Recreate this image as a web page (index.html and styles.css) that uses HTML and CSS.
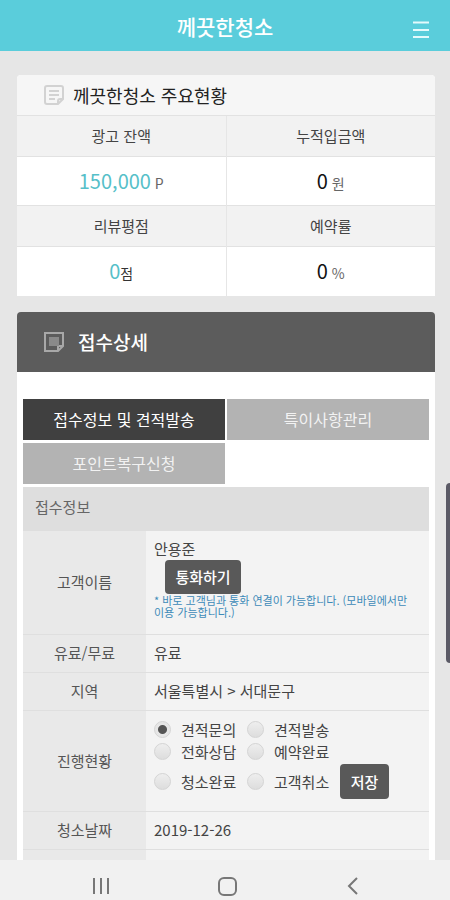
FILE: index.html
```html
<!DOCTYPE html>
<html lang="ko">
<head>
<meta charset="utf-8">
<meta name="viewport" content="width=device-width, initial-scale=1">
<title>께끗한청소</title>
<link rel="stylesheet" href="styles.css">
</head>
<body>
	<header class="top">
		<h1>께끗한청소</h1>
		<button type="button" class="menu" aria-label="메뉴">
			<svg width="18" height="18" viewBox="0 0 18 18"><path d="M1 1.5h16M1 9h16M1 16h16"/></svg>
		</button>
	</header>

	<main>
		<!-- 주요현황 -->
		<section class="summary">
			<h2>
				<svg width="20" height="20" viewBox="0 0 20 20"><path d="M3 1h14a2 2 0 0 1 2 2v11l-5 5H3a2 2 0 0 1-2-2V3a2 2 0 0 1 2-2z"/><path d="M19 14h-3a2 2 0 0 0-2 2v3M5 6h10M5 10h10M5 14h6"/></svg>
				께끗한청소 주요현황
			</h2>
			<table>
				<tr><th>광고 잔액</th><th>누적입금액</th></tr>
				<tr>
					<td><span class="num point">150,000</span> P</td>
					<td><span class="num">0</span> 원</td>
				</tr>
				<tr><th>리뷰평점</th><th>예약률</th></tr>
				<tr>
					<td><span class="num point">0</span><span class="dark">점</span></td>
					<td><span class="num">0</span> %</td>
				</tr>
			</table>
		</section>

		<!-- 접수상세 -->
		<section class="detail">
			<h2>
				<svg width="20" height="20" viewBox="0 0 20 20"><path d="M1 1h18v13l-5 5H1z"/><path d="M19 14h-5v5"/><path class="fill" d="M5 5h10v9H5z"/></svg>
				접수상세
			</h2>
			<div class="detailBody">
				<nav class="tabs">
					<a href="#" class="on">접수정보 및 견적발송</a>
					<a href="#">특이사항관리</a>
					<a href="#">포인트복구신청</a>
				</nav>
				<form>
				<table class="info">
					<caption>접수정보</caption>
					<tr>
						<th>고객이름</th>
						<td class="customer">
							안용준
							<button type="button" class="btn call">통화하기</button>
							<p class="note">* 바로 고객님과 통화 연결이 가능합니다. (모바일에서만 이용 가능합니다.)</p>
						</td>
					</tr>
					<tr><th>유료/무료</th><td>유료</td></tr>
					<tr><th>지역</th><td>서울특별시 &gt; 서대문구</td></tr>
					<tr>
						<th>진행현황</th>
						<td>
							<div class="status">
								<label><input type="radio" name="status" checked>견적문의</label>
								<label><input type="radio" name="status">견적발송</label>
								<label class="first"><input type="radio" name="status">전화상담</label>
								<label><input type="radio" name="status">예약완료</label>
								<label class="first"><input type="radio" name="status">청소완료</label>
								<label><input type="radio" name="status">고객취소</label>
								<button type="button" class="btn save">저장</button>
							</div>
						</td>
					</tr>
					<tr><th>청소날짜</th><td>2019-12-26</td></tr>
					<tr><th></th><td></td></tr>
				</table>
				</form>
			</div>
		</section>
	</main>

	<div class="edge"></div>

	<footer class="softkeys">
		<button type="button" aria-label="최근 앱"><svg width="20" height="20" viewBox="0 0 20 20"><path d="M3 2v16M10 2v16M17 2v16"/></svg></button>
		<button type="button" aria-label="홈"><svg width="20" height="20" viewBox="0 0 20 20"><rect x="2" y="2" width="17" height="17" rx="5"/></svg></button>
		<button type="button" aria-label="뒤로"><svg width="20" height="20" viewBox="0 0 20 20"><path d="M14 2l-8 8 8 8"/></svg></button>
	</footer>
</body>
</html>
```
FILE: styles.css
```css
* { box-sizing: border-box; }
body {
	display: flex;
	flex-direction: column;
	height: 100vh;
	margin: 0;
	overflow: hidden;
	background: #e6e6e6;
	color: #444;
	font: 15px/22px "Noto Sans CJK KR", sans-serif;
}
h1, h2, p { margin: 0; }
button {
	padding: 0;
	border: 0;
	background: none;
	font: inherit;
}
svg {
	display: block;
	fill: none;
	stroke: currentColor;
}
table {
	width: 100%;
	border-collapse: collapse;
	table-layout: fixed;
}
th { font-weight: normal; }

/* header */
.top {
	display: grid;
	grid-template-columns: 40px 1fr 40px;
	flex: none;
	align-items: center;
	height: 51px;
	background: #5acddb;
	color: #fff;
}
.top h1 {
	grid-column: 2;
	font-size: 21px;
	font-weight: 500;
	text-align: center;
}
.menu {
	padding: 8px 0 0 2px;
	color: #e4fafc;
}
.menu svg { stroke-width: 2; }

main {
	flex: 1;
	min-height: 0;
	overflow: hidden;
	padding: 24px 15px 0 17px;
}
section h2 {
	display: flex;
	align-items: center;
	padding-left: 27px;
}

/* summary */
.summary {
	overflow: hidden;
	margin-bottom: 16px;
	border-radius: 4px 4px 0 0;
	background: #fff;
}
.summary h2 {
	gap: 9px;
	height: 40px;
	background: #f6f6f6;
	color: #222;
	font-size: 18px;
	font-weight: 400;
}
.summary h2 svg {
	color: #d2d2d2;
	stroke-width: 2;
}
.summary th, .summary td {
	padding: 0;
	border-top: 1px solid #e2e2e2;
	text-align: center;
}
.summary th + th, .summary td + td { border-left: 1px solid #e6e6e6; }
.summary th {
	height: 41px;
	background: #f2f2f2;
}
.summary td {
	height: 49px;
	padding-top: 2px;
	color: #666;
	font-size: 14px;
}
.num {
	color: #111;
	font-size: 20px;
}
.summary .point { color: #56bfc9; }
.dark { color: #333; }

/* detail */
.detail h2 {
	gap: 14px;
	height: 60px;
	border-radius: 4px 4px 0 0;
	background: #5c5c5c;
	color: #fff;
	font-size: 19px;
	font-weight: 500;
}
.detail h2 svg {
	color: #a8a8a8;
	stroke-width: 2;
}
.detail h2 .fill {
	fill: #8a8a8a;
	stroke: none;
}
.detailBody {
	padding: 27px 6px 0;
	background: #fff;
}
.tabs {
	display: grid;
	grid-template-columns: 1fr 1fr;
	gap: 3px 2px;
	margin-bottom: 3px;
}
.tabs a {
	height: 41px;
	background: #b3b3b3;
	color: #f2f2f2;
	font-size: 16px;
	line-height: 41px;
	text-align: center;
	text-decoration: none;
}
.tabs .on {
	background: #404040;
	color: #fff;
}
.info caption {
	height: 44px;
	padding-left: 12px;
	background: #dedede;
	color: #666;
	line-height: 40px;
	text-align: left;
}
.info th, .info td {
	height: 38px;
	padding: 0 8px;
	border-bottom: 1px solid #dfdfdf;
}
.info th {
	width: 123px;
	background: #e9e9e9;
	color: #555;
}
.info td { background: #f3f3f3; }
.info .customer { padding: 7px 8px 16px; }
.btn {
	display: block;
	border-radius: 4px;
	background: #595959;
	color: #fff;
	font-weight: 500;
}
.call {
	width: 76px;
	height: 34px;
	margin-left: 11px;
}
.note {
	color: #3d8ab8;
	font-size: 11px;
	line-height: 12px;
	word-break: keep-all;
}
.status {
	display: grid;
	grid-template-columns: 93px 93px auto;
	grid-template-rows: 22px 22px 38px;
	align-items: center;
	padding: 8px 0 10px;
}
.status label {
	display: flex;
	align-items: center;
	gap: 10px;
}
.status .first { grid-column: 1; }
.status input {
	width: 17px;
	height: 17px;
	margin: 0;
	border: 1px solid #d5d5d5;
	border-radius: 50%;
	appearance: none;
	background: linear-gradient(#eee, #ddd);
}
.status input:checked { background: radial-gradient(circle, #555 4px, #e6e6e6 5px); }
.save {
	width: 49px;
	height: 35px;
}

/* edge panel handle */
.edge {
	position: fixed;
	top: 483px;
	right: 0;
	width: 4px;
	height: 180px;
	border-radius: 4px 0 0 4px;
	background: #5b5a66;
}

.softkeys {
	display: flex;
	flex: none;
	justify-content: space-between;
	height: 40px;
	padding: 16px 87px 0 91px;
	background: #f1f1f1;
	color: #777;
}
.softkeys button {
	height: 20px;
	color: inherit;
}
.softkeys svg { stroke-width: 2; }
```
